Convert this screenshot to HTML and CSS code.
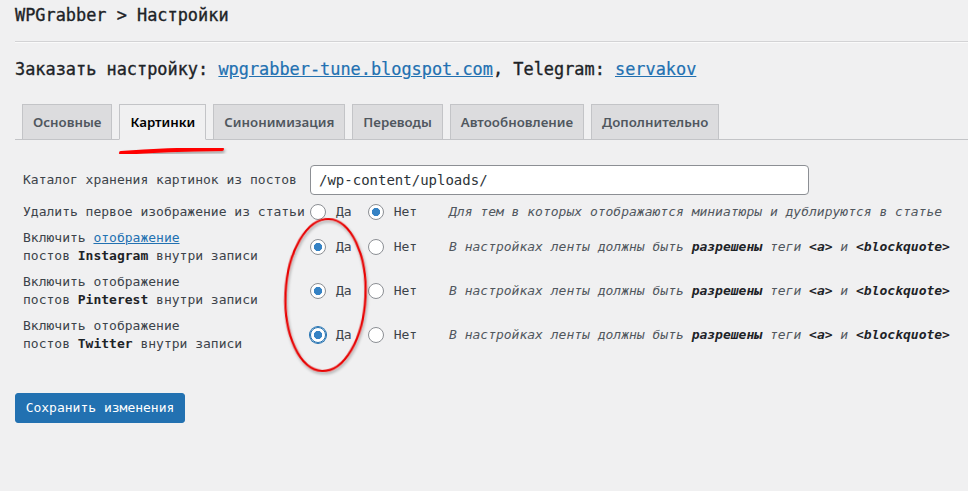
FILE: index.html
```html
<!DOCTYPE html>
<html lang="ru">
<head>
<meta charset="utf-8">
<title>WPGrabber &gt; Настройки</title>
<link rel="stylesheet" href="styles.css">
</head>
<body>
<div class="wrap">
  <h1 class="title">WPGrabber &gt; Настройки</h1>
  <h3 class="order">Заказать настройку: <a href="#">wpgrabber-tune.blogspot.com</a>, Telegram: <a href="#">servakov</a></h3>
  <nav class="tabs">
    <a class="tab" href="#">Основные</a>
    <a class="tab active" href="#">Картинки</a>
    <a class="tab" href="#">Синонимизация</a>
    <a class="tab" href="#">Переводы</a>
    <a class="tab" href="#">Автообновление</a>
    <a class="tab" href="#">Дополнительно</a>
  </nav>
  <form class="form">
    <div class="lbl">Каталог хранения картинок из постов</div>
    <div class="field"><input class="text" type="text" value="/wp-content/uploads/"></div>

    <div class="lbl">Удалить первое изображение из статьи</div>
    <div class="opts">
      <label class="opt"><input type="radio" name="r1">Да</label>
      <label class="opt"><input type="radio" name="r1" checked>Нет</label>
    </div>
    <div class="desc">Для тем в которых отображаются миниатюры и дублируются в статье</div>

    <div class="lbl">Включить <a href="#">отображение</a><br>постов <b>Instagram</b> внутри записи</div>
    <div class="opts">
      <label class="opt"><input type="radio" name="r2" checked>Да</label>
      <label class="opt"><input type="radio" name="r2">Нет</label>
    </div>
    <div class="desc">В настройках ленты должны быть <b>разрешены</b> теги <b>&lt;a&gt;</b> и <b>&lt;blockquote&gt;</b></div>

    <div class="lbl">Включить отображение<br>постов <b>Pinterest</b> внутри записи</div>
    <div class="opts">
      <label class="opt"><input type="radio" name="r3" checked>Да</label>
      <label class="opt"><input type="radio" name="r3">Нет</label>
    </div>
    <div class="desc">В настройках ленты должны быть <b>разрешены</b> теги <b>&lt;a&gt;</b> и <b>&lt;blockquote&gt;</b></div>

    <div class="lbl">Включить отображение<br>постов <b>Twitter</b> внутри записи</div>
    <div class="opts">
      <label class="opt"><input class="focus" type="radio" name="r4" checked>Да</label>
      <label class="opt"><input type="radio" name="r4">Нет</label>
    </div>
    <div class="desc">В настройках ленты должны быть <b>разрешены</b> теги <b>&lt;a&gt;</b> и <b>&lt;blockquote&gt;</b></div>
  </form>
  <button class="save" type="button">Сохранить изменения</button>
</div>
<svg class="marks" width="968" height="491" viewBox="0 0 968 491">
  <defs>
    <filter id="sh" x="-20%" y="-20%" width="140%" height="140%">
      <feDropShadow dx="1" dy="2" stdDeviation="1.5" flood-color="#000" flood-opacity="0.35"/>
    </filter>
  </defs>
  <path d="M121 153 Q165 149.5 222 149" fill="none" stroke="#f00" stroke-width="4" stroke-linecap="round" filter="url(#sh)"/>
  <ellipse cx="325.5" cy="295" rx="40" ry="76" transform="rotate(2.6 325.5 295)" fill="none" stroke="#e80000" stroke-width="2.2" filter="url(#sh)"/>
</svg>
</body>
</html>
```
FILE: styles.css
```css
html, body {
  margin: 0;
  padding: 0;
  background: #f0f0f1;
}
body {
  width: 968px;
  height: 491px;
  overflow: hidden;
  position: relative;
  font-family: "DejaVu Sans Mono", monospace;
  font-size: 13px;
  color: #3c434a;
}
.wrap {
  margin-left: 15px;
}
.title {
  margin: 0;
  padding: 4px 0 15px;
  font-size: 16.9px;
  line-height: 22px;
  font-weight: 400;
  color: #1d2327;
  -webkit-text-stroke: 0.35px #1d2327;
  border-bottom: 1px solid #d3d3d5;
  box-shadow: 0 1px 0 #fafafa;
}
.order {
  margin: 16px 0 0;
  font-size: 16.9px;
  line-height: 22px;
  font-weight: 400;
  color: #1d2327;
  -webkit-text-stroke: 0.35px #1d2327;
}
.order a {
  -webkit-text-stroke: 0.2px #2271b1;
}
.order a, .lbl a {
  color: #2271b1;
  text-decoration: underline;
}
.tabs {
  display: flex;
  gap: 7px;
  margin-top: 24px;
  padding-left: 7px;
  border-bottom: 1px solid #c3c4c7;
  height: 35px;
  align-items: flex-start;
}
.tab {
  display: block;
  font-family: "Noto Sans", sans-serif;
  font-size: 13.3px;
  font-weight: 600;
  line-height: 24px;
  padding: 5px 10px;
  border: 1px solid #c3c4c7;
  background: #dcdcde;
  color: #50575e;
  text-decoration: none;
}
.tab.active {
  background: #f0f0f1;
  border-bottom-color: #f0f0f1;
  color: #000;
}
.form {
  display: grid;
  grid-template-columns: 287px 139px 1fr;
  grid-template-rows: 30px 18px 36px 36px 36px;
  row-gap: 8px;
  margin: 25px 0 0 8px;
  align-items: center;
  line-height: 18px;
}
.lbl {
  color: #3c434a;
  white-space: nowrap;
}
.lbl b, .desc b {
  color: #1d2327;
}
.field {
  grid-column: 2 / 4;
  height: 30px;
}
.text {
  box-sizing: border-box;
  width: 499px;
  height: 30px;
  margin: 0;
  padding: 0 8px;
  border: 1px solid #8c8f94;
  border-radius: 4px;
  background: #fff;
  font-family: "DejaVu Sans Mono", monospace;
  font-size: 14px;
  color: #2c3338;
}
.opts {
  display: flex;
  align-items: center;
}
.opt {
  display: flex;
  align-items: center;
  margin-right: 16px;
  color: #3c434a;
}
.opt input {
  appearance: none;
  -webkit-appearance: none;
  box-sizing: border-box;
  width: 16px;
  height: 16px;
  margin: 0 10px 0 0;
  border: 1px solid #8c8f94;
  border-radius: 50%;
  background: #fff;
}
.opt input:checked {
  background: radial-gradient(circle, #3582c4 0 3.8px, #fff 4.4px);
}
.opt input.focus {
  border-color: #2271b1;
  box-shadow: 0 0 0 1px #2271b1;
}
.desc {
  font-style: italic;
  color: #50575e;
  white-space: nowrap;
}
.save {
  display: block;
  margin-top: 40px;
  width: 170px;
  height: 30px;
  padding: 0;
  border: 1px solid #2271b1;
  border-radius: 3px;
  background: #2271b1;
  color: #fff;
  font-family: "DejaVu Sans Mono", monospace;
  font-size: 13px;
  line-height: 28px;
}
.marks {
  position: absolute;
  left: 0;
  top: 0;
  pointer-events: none;
}
```
